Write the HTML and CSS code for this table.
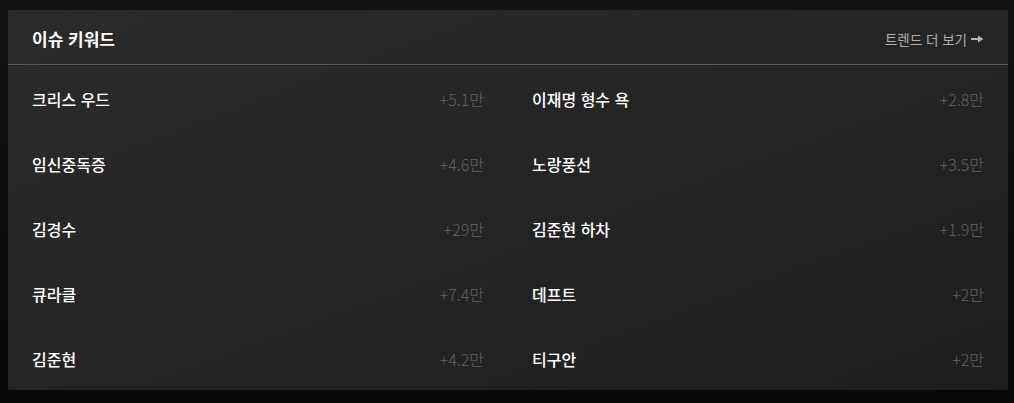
FILE: index.html
```html
<!DOCTYPE html>
<html lang="ko">

<head>
    <meta charset="UTF-8">
    <meta name="viewport" content="width=device-width, initial-scale=1.0">
    <title>이슈 키워드</title>
    <link rel="stylesheet" href="styles.css">
</head>

<body>

    <div class="card">
        <div class="cardHeader">
            <h2>이슈 키워드</h2>
            <a href="#" class="more">트렌드 더 보기
                <svg class="arrow" width="13" height="8" viewBox="0 0 13 8">
                    <rect x="0" y="3" width="8" height="2" fill="#b4b4b4"></rect>
                    <path d="M7 0.5 L12.5 4 L7 7.5 Z" fill="#b4b4b4"></path>
                </svg>
            </a>
        </div>
        <ul class="keywords">
            <li><span class="name">크리스 우드</span><span class="count">+5.1만</span></li>
            <li><span class="name">이재명 형수 욕</span><span class="count">+2.8만</span></li>
            <li><span class="name">임신중독증</span><span class="count">+4.6만</span></li>
            <li><span class="name">노랑풍선</span><span class="count">+3.5만</span></li>
            <li><span class="name">김경수</span><span class="count">+29만</span></li>
            <li><span class="name">김준현 하차</span><span class="count">+1.9만</span></li>
            <li><span class="name">큐라클</span><span class="count">+7.4만</span></li>
            <li><span class="name">데프트</span><span class="count">+2만</span></li>
            <li><span class="name">김준현</span><span class="count">+4.2만</span></li>
            <li><span class="name">티구안</span><span class="count">+2만</span></li>
        </ul>
    </div>

</body>

</html>
```

FILE: styles.css
```css
html {
    background: linear-gradient(#121212, #080808);
    min-height: 100%;
}

body {
    margin: 0;
    padding: 10px 6px 13px 8px;
    font-family: "Noto Sans CJK KR", "Noto Sans", sans-serif;
}

.card {
    background: linear-gradient(160deg, #2b2b2b, #1e1e1e);
    border-radius: 2px;
}

.cardHeader {
    display: flex;
    justify-content: space-between;
    align-items: center;
    height: 55px;
    padding: 3px 24px 0 24px;
    box-sizing: border-box;
    border-bottom: 1px solid #5a5a5a;
}

.cardHeader h2 {
    margin: 0;
    font-size: 17px;
    font-weight: bold;
    color: #fff;
}

.more {
    display: flex;
    align-items: center;
    gap: 4px;
    color: #b0b0b0;
    font-size: 13.5px;
    text-decoration: none;
}

.keywords {
    list-style-type: none;
    margin: 0;
    padding: 0 24px;
    display: grid;
    grid-template-columns: 1fr 1fr;
    column-gap: 48px;
}

.keywords li {
    display: flex;
    justify-content: space-between;
    align-items: center;
    height: 65px;
    padding-top: 2px;
    box-sizing: border-box;
}

.name {
    color: #fff;
    font-size: 16px;
    font-weight: 500;
}

.count {
    color: #626262;
    font-size: 16px;
    font-weight: 300;
}
```
